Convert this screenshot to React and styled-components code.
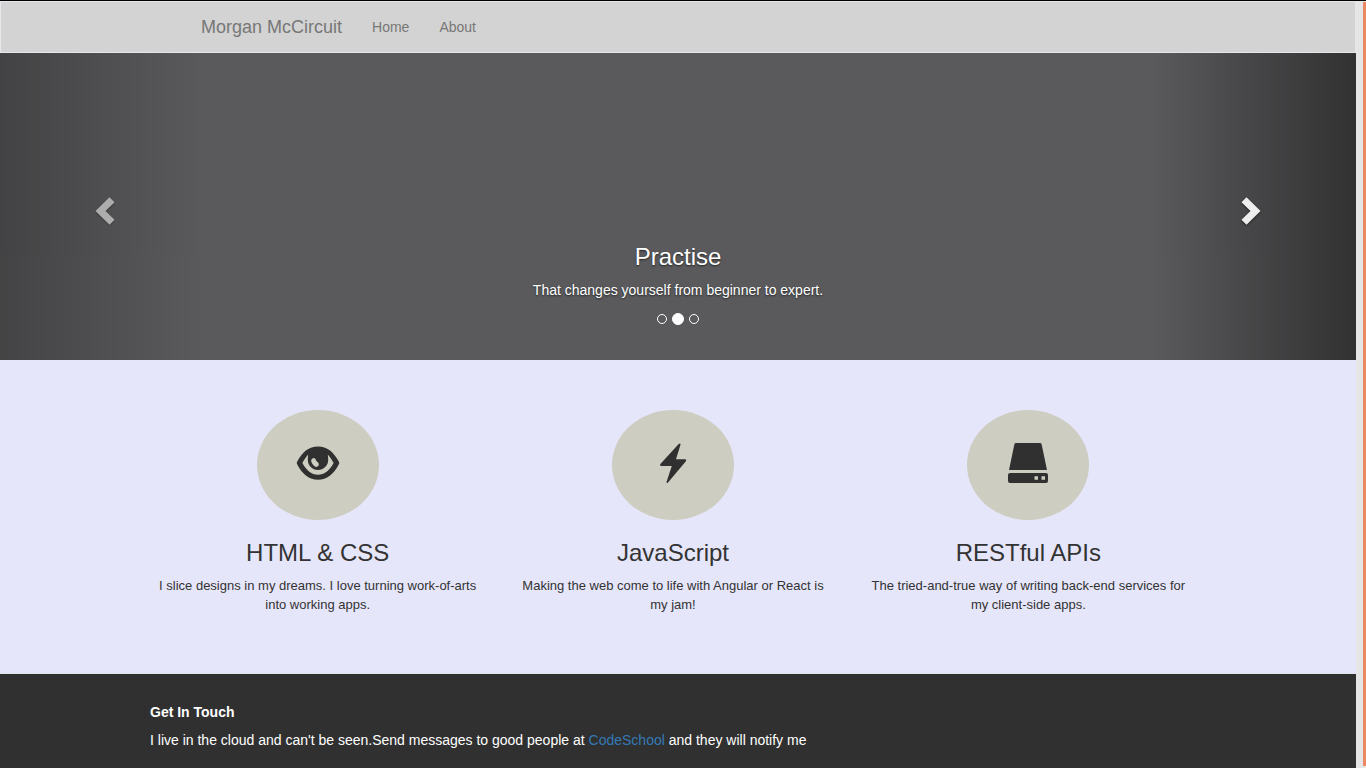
import React from "react";
import styled, { createGlobalStyle } from "styled-components";

const GlobalStyle = createGlobalStyle`
  *, *::before, *::after { box-sizing: border-box; }
  body {
    margin: 0;
    background: #303030;
    color: #333;
    font: 14px/20px "Liberation Sans", Arial, sans-serif;
  }
`;

const Window = styled.div`
  display: flex;
  min-height: 100vh;
  border-top: 1px solid #000;
`;

const Page = styled.div`
  flex: 1;
  min-width: 0;
  display: flex;
  flex-direction: column;
`;

const ScrollTrack = styled.div`
  display: flex;
  width: 10px;
  padding: 1px 0 2px 7px;
  background: #e5e5e5;
`;

const ScrollThumb = styled.div`
  flex: 1;
  background: #ea8a64;
`;

const Navbar = styled.nav`
  display: flex;
  align-items: center;
  height: 52px;
  padding-left: 185px;
  background: #d3d3d3;
  border: 1px solid #e6e6ec;
`;

const Brand = styled.a`
  padding: 15px;
  font-size: 18px;
  color: #777;
  text-decoration: none;
`;

const NavLink = styled.a`
  padding: 15px;
  color: #777;
  text-decoration: none;
`;

const Carousel = styled.section`
  display: flex;
  height: 307px;
  background: #5a5a5c;
`;

const CarouselControl = styled.button`
  display: flex;
  align-items: center;
  justify-content: center;
  width: 15%;
  padding: ${(p) => (p.$fade === "right" ? "8px 0 0 6px" : "8px 6px 0 0")};
  border: 0;
  cursor: pointer;
  opacity: ${(p) => (p.$hovered ? 0.9 : 0.5)};
  background: linear-gradient(
    to ${(p) => p.$fade},
    rgba(0, 0, 0, 0.5) 0%,
    rgba(0, 0, 0, 0) 100%
  );
`;

const Chevron = styled.svg`
  width: 30px;
  height: 30px;
  fill: #fff;
  filter: drop-shadow(0 1px 1px rgba(0, 0, 0, 0.6));
`;

const Slide = styled.div`
  flex: 1;
  display: flex;
  flex-direction: column;
  align-items: center;
  justify-content: flex-end;
  padding-bottom: 34px;
  color: #fff;
  text-align: center;
  text-shadow: 0 1px 2px rgba(0, 0, 0, 0.6);
`;

const Heading = styled.h3`
  margin: 0 0 10px;
  font-size: 24px;
  line-height: 26px;
  font-weight: 400;
`;

const SlideText = styled.p`
  margin: 0 0 12px;
`;

const Indicators = styled.div`
  display: flex;
  align-items: center;
  gap: 5px;
  height: 14px;
`;

const Indicator = styled.button`
  width: ${(p) => (p.$active ? 12 : 10)}px;
  height: ${(p) => (p.$active ? 12 : 10)}px;
  padding: 0;
  border: 1px solid #fff;
  border-radius: 50%;
  background: ${(p) => (p.$active ? "#fff" : "transparent")};
  cursor: pointer;
`;

const Skills = styled.section`
  display: grid;
  grid-template-columns: repeat(3, 1fr);
  min-height: 314px;
  padding: 50px 150px 50px 140px;
  background: #e6e6fa;
  border-bottom: 1px solid #dfe6e6;
`;

const Skill = styled.article`
  display: flex;
  flex-direction: column;
  align-items: center;
  padding: 0 15px;
  text-align: center;
`;

const Badge = styled.div`
  display: flex;
  align-items: center;
  justify-content: center;
  width: 122px;
  height: 110px;
  margin-bottom: 20px;
  padding-bottom: 4px;
  border-radius: 50%;
  background: #cdcdc1;
`;

const Glyph = styled.svg`
  width: 44px;
  height: 44px;
  fill: #303030;
`;

const SkillText = styled.p`
  max-width: 320px;
  margin: 0;
  font-size: 13px;
  line-height: 19px;
`;

const Footer = styled.footer`
  flex: 1;
  padding: 28px 150px 10px;
  background: #303030;
  color: #fff;
`;

const FooterTitle = styled.h4`
  margin: 0 0 8px;
  font-size: 14px;
  line-height: 20px;
`;

const FooterText = styled.p`
  margin: 0;
`;

const FooterLink = styled.a`
  color: #337ab7;
  text-decoration: none;
`;

const EyeGlyph = () => (
  <Glyph viewBox="0 0 44 44" aria-hidden="true">
    <path
      fillRule="evenodd"
      d="M22 5.5C31 5.5 37.500 10.500 43 21Q43.500 22 43 23C37.500 33.500 31 38.700 22 38.700S6.500 33.500 1 23Q.5 22 1 21C6.500 10.500 13 5.500 22 5.500ZM12.200 13.500C10 16 8 19 6.400 22C10.500 29.500 15.500 33.700 22 33.700S33.500 29.500 37.600 22C36 19 34 16 31.800 13.500C32 15 32.200 17 32.200 19C32.200 24.600 27.600 29 22 29S11.800 24.600 11.800 19C11.800 17 12 15 12.200 13.500Z"
    />
    <ellipse
      cx="19"
      cy="21.500"
      rx="3"
      ry="4.800"
      fill="#cdcdc1"
      transform="rotate(-32 19 21.500)"
    />
    <path d="M19 16.500L24 17L23.500 22Q20 21 19 16.500Z" />
  </Glyph>
);

const BoltGlyph = () => (
  <Glyph viewBox="0 0 44 44" aria-hidden="true">
    <path d="M27.700 3Q29.900 1.800 29.400 3.900L25 18.300H34.200Q36 18.500 34.900 20.200L17 41.500Q15.300 42.800 15.600 40.800L20.800 25H10Q8.200 24.700 9.400 23.100Z" />
  </Glyph>
);

const DriveGlyph = () => (
  <Glyph viewBox="0 0 44 44" aria-hidden="true">
    <path
      fillRule="evenodd"
      d="M10 2H34Q35.300 2 35.600 3.200L41 28.900H3L8.400 3.200Q8.700 2 10 2ZM4 32H40Q42 32 42 34V40Q42 42 40 42H4Q2 42 2 40V34Q2 32 4 32ZM28.500 35.300V38.800H32V35.300ZM35.500 35.300V38.800H39V35.300Z"
    />
  </Glyph>
);

const skills = [
  {
    icon: EyeGlyph,
    title: "HTML & CSS",
    text: "I slice designs in my dreams. I love turning work-of-arts into working apps.",
  },
  {
    icon: BoltGlyph,
    title: "JavaScript",
    text: "Making the web come to life with Angular or React is my jam!",
  },
  {
    icon: DriveGlyph,
    title: "RESTful APIs",
    text: "The tried-and-true way of writing back-end services for my client-side apps.",
  },
];

export default function App() {
  return (
    <>
      <GlobalStyle />
      <Window>
        <Page>
          <Navbar>
            <Brand href="#">Morgan McCircuit</Brand>
            <NavLink href="#home">Home</NavLink>
            <NavLink href="#about">About</NavLink>
          </Navbar>
          <Carousel aria-label="Highlights">
            <CarouselControl $fade="right" aria-label="Previous">
              <Chevron viewBox="0 0 30 30" aria-hidden="true">
                <path d="M19.500 1.300L24.500 6.300L15.500 15L24.500 23.700L19.500 28.700L5.500 15Z" />
              </Chevron>
            </CarouselControl>
            <Slide>
              <Heading>Practise</Heading>
              <SlideText>
                That changes yourself from beginner to expert.
              </SlideText>
              <Indicators>
                <Indicator aria-label="Slide 1" />
                <Indicator $active aria-label="Slide 2" />
                <Indicator aria-label="Slide 3" />
              </Indicators>
            </Slide>
            <CarouselControl $fade="left" $hovered aria-label="Next">
              <Chevron viewBox="0 0 30 30" aria-hidden="true">
                <path d="M10.500 1.300L5.500 6.300L14.500 15L5.500 23.700L10.500 28.700L24.500 15Z" />
              </Chevron>
            </CarouselControl>
          </Carousel>
          <Skills>
            {skills.map(({ icon: Icon, title, text }) => (
              <Skill key={title}>
                <Badge>
                  <Icon />
                </Badge>
                <Heading>{title}</Heading>
                <SkillText>{text}</SkillText>
              </Skill>
            ))}
          </Skills>
          <Footer>
            <FooterTitle>Get In Touch</FooterTitle>
            <FooterText>
              I live in the cloud and can't be seen.Send messages to good people
              at <FooterLink href="#codeschool">CodeSchool</FooterLink> and they
              will notify me
            </FooterText>
          </Footer>
        </Page>
        <ScrollTrack>
          <ScrollThumb />
        </ScrollTrack>
      </Window>
    </>
  );
}
